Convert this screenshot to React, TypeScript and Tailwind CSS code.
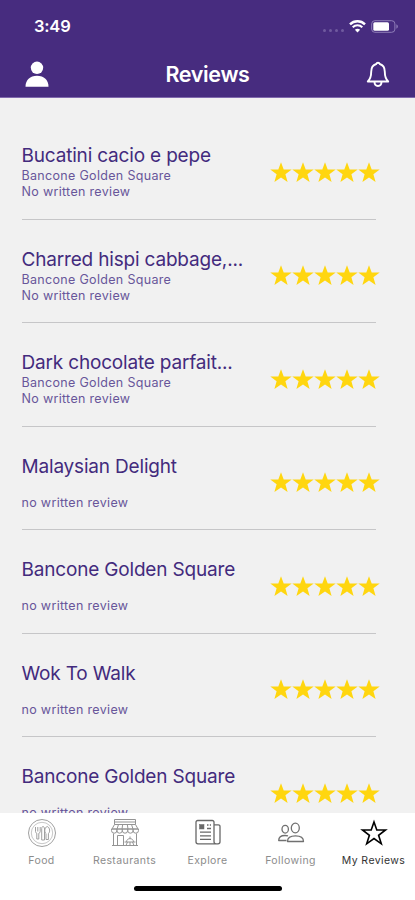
import type { ReactNode } from 'react';
import { clsx } from 'clsx';

interface Review {
  title: string;
  place?: string;
  note: string;
}

const reviews: Review[] = [
  { title: 'Bucatini cacio e pepe', place: 'Bancone Golden Square', note: 'No written review' },
  { title: 'Charred hispi cabbage,...', place: 'Bancone Golden Square', note: 'No written review' },
  { title: 'Dark chocolate parfait...', place: 'Bancone Golden Square', note: 'No written review' },
  { title: 'Malaysian Delight', note: 'no written review' },
  { title: 'Bancone Golden Square', note: 'no written review' },
  { title: 'Wok To Walk', note: 'no written review' },
  { title: 'Bancone Golden Square', note: 'no written review' },
];

const STAR_POINTS = '11,0.2 13.7,7.4 21.7,7.5 15.4,12.3 17.6,20.1 11,15.6 4.4,20.1 6.6,12.3 0.3,7.5 8.3,7.4';

const Stars = () => (
  <div className="flex">
    {[1, 2, 3, 4, 5].map((n) => (
      <svg key={n} className="h-[21px] w-[22px] shrink-0" viewBox="0 0 22 21" fill="#ffd60f">
        <polygon points={STAR_POINTS} />
      </svg>
    ))}
  </div>
);

const ReviewRow = ({ title, place, note }: Review) => (
  <li className="flex h-[103.5px] justify-between border-b-[1.5px] border-[#c6c6c8]">
    <div className="pt-[28px] whitespace-nowrap text-[#432b7d]">
      <h2 className="text-[19px] leading-6 tracking-[-0.18px]">{title}</h2>
      <p className="h-4 text-[12.5px] leading-4 tracking-[0.32px] text-[#68569a]">{place}</p>
      <p className="text-[12.5px] leading-4 tracking-[0.32px] text-[#68569a]">{note}</p>
    </div>
    <div className="-mr-[3.5px] pt-[45.5px]">
      <Stars />
    </div>
  </li>
);

const StatusBar = () => (
  <div className="flex h-[52px] items-center pr-4 pl-[34px]">
    <span className="text-[16.5px] font-semibold tracking-[-0.2px]">3:49</span>
    <div className="ml-auto flex items-center">
      <div className="mt-2 mr-[5px] flex gap-[3px]">
        {[1, 2, 3, 4].map((n) => (
          <span key={n} className="size-[3px] rounded-full bg-[#705a9f]" />
        ))}
      </div>
      <svg className="h-[13px] w-[17px]" viewBox="0 0 17 13" fill="none" stroke="white">
        <path d="M1 4.3C5.1.2 11.9.2 16 4.3" strokeWidth="2.4" />
        <path d="M3.7 7.2c2.7-2.6 6.9-2.6 9.6 0" strokeWidth="2.1" />
        <path d="M5.9 9.8c1.5-1.4 3.7-1.4 5.2 0L8.5 12.5z" fill="white" stroke="none" />
      </svg>
      <svg className="ml-[5px] h-[13px] w-[28px]" viewBox="0 0 28 13">
        <rect x="0.7" y="0.7" width="23.2" height="11.6" rx="3.2" fill="none" stroke="#8f7eb8" />
        <rect x="2.3" y="2.2" width="15.7" height="8.6" rx="1.5" fill="white" />
        <path d="M25.4 4.3c2 .9 2 3.5 0 4.4z" fill="#8f7eb8" />
      </svg>
    </div>
  </div>
);

const Header = () => (
  <header className="h-[97.5px] shrink-0 border-b border-[#8069ad] bg-[#472c7f] text-white">
    <StatusBar />
    <div className="flex h-[44px] items-center justify-between px-[25px]">
      <svg className="h-[27px] w-6" viewBox="0 0 24 27" fill="white">
        <circle cx="12" cy="6.8" r="6.2" />
        <path d="M.5 25.8C.5 19 5 14.8 12 14.8s11.5 4.2 11.5 11z" />
      </svg>
      <h1 className="text-[21.5px] font-semibold tracking-[-0.35px]">Reviews</h1>
      <svg className="h-[27px] w-6" viewBox="0 0 24 27" fill="none" stroke="white" strokeWidth="1.9" strokeLinejoin="round">
        <path d="M10.2 3a1.9 1.9 0 0 1 3.6 0C17.4 4 18.8 6.9 18.8 10.8c0 5 1.1 7.5 3.4 9.7H1.8c2.3-2.2 3.4-4.7 3.4-9.7C5.2 6.9 6.6 4 10.2 3z" />
        <path d="M8.5 20.8c0 5.6 7 5.6 7 0" />
      </svg>
    </div>
  </header>
);

const FoodIcon = () => (
  <svg className="size-[30px]" viewBox="0 0 30 30" fill="none" stroke="currentColor" strokeWidth="1">
    <circle cx="15" cy="15" r="13.5" />
    <circle cx="15" cy="15" r="10.7" strokeWidth=".6" />
    <path d="M8.5 9v4.5c0 1 .6 1.6 1.3 1.8V21h2v-5.7c.9-.2 1.4-.9 1.4-1.8V9M10.8 9v4.5" />
    <path d="M14.7 22V10.5c0-2.7 2.8-2.7 2.8.5V22zM19 21.5v-6c-1.800-1-1.800-6 1.200-7 3 1 3 6 1.200 7v6z" />
  </svg>
);

const RestaurantIcon = () => (
  <svg className="size-[30px]" viewBox="0 0 30 30" fill="none" stroke="currentColor" strokeWidth="1">
    <path d="M4.5 6.5V1.5h21v5M4.5 4h21M4.5 6.5h21l2.5 4.5H2zM8.5 6.5 7 11M12.7 6.5 12 11M17.3 6.5 18 11M21.5 6.5 23 11" />
    <path d="M1.5 11h27M1.5 11v1.5a2.7 2.7 0 0 0 5.4 0V11v1.5a2.7 2.7 0 0 0 5.4 0V11v1.5a2.7 2.7 0 0 0 5.4 0V11v1.5a2.7 2.7 0 0 0 5.4 0V11v1.5a2.7 2.7 0 0 0 5.4 0V11" />
    <path d="M3.5 15.5v12h23v-12M2 27.5h26M7.5 27.5V17.5h6v10M14.5 24h11M16.5 24c0-4.5 7-4.5 7 0M20 20.5v-2M17.5 24l-1.5 3.5M22.5 24l1.5 3.5M20 24v3.5" />
  </svg>
);

const ExploreIcon = () => (
  <svg className="size-[30px]" viewBox="0 0 30 30" fill="none" stroke="currentColor" strokeWidth="1.3">
    <path d="M21 23.5V4.2c0-1.1-.7-1.7-1.7-1.7H4.7C3.7 2.5 3 3.1 3 4.2v19.6c0 1.3.8 2 2 2h20c1.4 0 2-.9 2-2V8.5c0-1.100-.7-1.700-1.700-1.700H21M21 23.500c0 1.300.8 2.300 2 2.300" />
    <rect x="6.5" y="6.5" width="4.5" height="4.5" fill="currentColor" strokeWidth=".5" />
    <path d="M14 7h1.5M16.800 7h1.200M14 10.500h4M7 14.200h11M7 17.800h11M7 21.400h11" />
  </svg>
);

const FollowingIcon = () => (
  <svg className="size-[30px]" viewBox="0 0 30 30" fill="none" stroke="currentColor" strokeWidth="1.3" strokeLinejoin="round">
    <ellipse cx="19.3" cy="10" rx="4" ry="4.8" />
    <ellipse cx="9.2" cy="11.2" rx="3.2" ry="3.9" />
    <path d="M11.5 23.5c0-3.9 3-5.6 8-5.6s8 1.7 8 5.6zM10.5 22.5H2.7c0-3.4 2.3-5 6.3-5 1.2 0 2.2.1 3 .4" />
  </svg>
);

const ReviewsIcon = () => (
  <svg className="size-[30px]" viewBox="0 0 30 30" fill="none" stroke="currentColor" strokeWidth="1.6">
    <path d="M15 4 17.800 12H26.500l-6.900 5.300 2.700 8.500-7.300-5.200L7.700 25.800l2.700-8.500L3.500 12h8.700z" />
  </svg>
);

interface TabProps {
  label: string;
  icon: ReactNode;
  tone: string;
  active?: boolean;
}

const Tab = ({ label, icon, tone, active }: TabProps) => (
  <div className={clsx('flex flex-1 flex-col items-center', tone)}>
    {icon}
    <span
      className={clsx(
        'mt-[5px] text-[10.5px] leading-4 tracking-[0.4px] whitespace-nowrap',
        active ? 'text-[#333333]' : 'text-[#8c8c8c]'
      )}
    >
      {label}
    </span>
  </div>
);

const TabBar = () => (
  <nav className="flex h-[87px] shrink-0 flex-col items-center bg-white pt-[5px]">
    <div className="flex w-full">
      <Tab label="Food" icon={<FoodIcon />} tone="text-[#a0a0a0]" />
      <Tab label="Restaurants" icon={<RestaurantIcon />} tone="text-[#949494]" />
      <Tab label="Explore" icon={<ExploreIcon />} tone="text-[#686868]" />
      <Tab label="Following" icon={<FollowingIcon />} tone="text-[#707070]" />
      <Tab label="My Reviews" icon={<ReviewsIcon />} tone="text-black" active />
    </div>
    <div className="mt-[17px] h-[5px] w-[148px] rounded-full bg-black" />
  </nav>
);

export default function App() {
  return (
    <div className="flex h-[900px] w-[415px] flex-col overflow-hidden bg-[#f1f1f1] font-['Inter',sans-serif]">
      <Header />
      <main className="min-h-0 flex-1 overflow-hidden pt-[18.5px] pr-[39px] pl-[21.5px]">
        <ul>
          {reviews.map((review, i) => (
            <ReviewRow key={i} {...review} />
          ))}
        </ul>
      </main>
      <TabBar />
    </div>
  );
}
